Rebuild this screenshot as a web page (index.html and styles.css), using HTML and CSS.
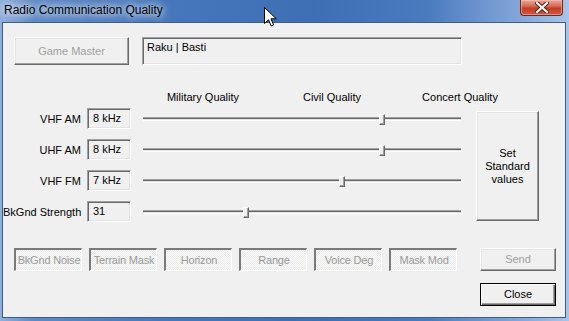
FILE: index.html
```html
<!DOCTYPE html>
<html lang="en">
  <head>
    <meta charset="UTF-8" />
    <title>Radio Communication Quality</title>
    <link rel="stylesheet" href="styles.css">
  </head>
  <body>
    <div class="window">
      <div class="titlebar">
        <span class="title">Radio Communication Quality</span>
        <button class="close-x" title="Close">
          <svg width="14" height="11" viewBox="0 0 14 11">
            <path d="M2 1 L12 10 M12 1 L2 10" stroke="#5a1a10" stroke-width="4" stroke-linecap="square" />
            <path d="M2 1 L12 10 M12 1 L2 10" stroke="#ffffff" stroke-width="2.2" stroke-linecap="square" />
          </svg>
        </button>
      </div>

      <div class="client">
        <div class="top-row">
          <button class="btn btn-disabled gm-btn">Game Master</button>
          <div class="sunken name-box">Raku | Basti</div>
        </div>

        <div class="scale-head">
          <span class="scale-mil">Military Quality</span>
          <span class="scale-civ">Civil Quality</span>
          <span class="scale-con">Concert Quality</span>
        </div>

        <div class="main">
          <div class="rows">
            <div class="row">
              <span class="row-label">VHF AM</span>
              <div class="sunken field">8 kHz</div>
              <div class="track"><span class="thumb" style="left: 236px"></span></div>
            </div>
            <div class="row">
              <span class="row-label">UHF AM</span>
              <div class="sunken field">8 kHz</div>
              <div class="track"><span class="thumb" style="left: 236px"></span></div>
            </div>
            <div class="row">
              <span class="row-label">VHF FM</span>
              <div class="sunken field">7 kHz</div>
              <div class="track"><span class="thumb" style="left: 196px"></span></div>
            </div>
            <div class="row">
              <span class="row-label">BkGnd Strength</span>
              <div class="sunken field">31</div>
              <div class="track"><span class="thumb" style="left: 100px"></span></div>
            </div>
          </div>
          <button class="btn set-btn">Set<br>Standard<br>values</button>
        </div>

        <div class="bottom">
          <div class="toggles">
            <button class="toggle">BkGnd Noise</button>
            <button class="toggle">Terrain Mask</button>
            <button class="toggle">Horizon</button>
            <button class="toggle">Range</button>
            <button class="toggle">Voice Deg</button>
            <button class="toggle">Mask Mod</button>
          </div>
          <div class="actions">
            <button class="btn btn-disabled">Send</button>
            <button class="btn btn-default">Close</button>
          </div>
        </div>
      </div>

      <!-- mouse pointer over the title bar -->
      <svg class="cursor" width="14" height="21" viewBox="0 0 14 21">
        <path d="M0.5 0.5 L0.5 16.5 L4.5 12.8 L7.2 19 L9.6 18 L7 11.8 L12.3 11.8 Z" fill="#fff" stroke="#000" stroke-width="1" stroke-linejoin="miter" />
      </svg>
    </div>
  </body>
</html>
```

FILE: styles.css
```css
* {
  margin: 0;
  padding: 0;
  box-sizing: border-box;
}

body {
  font-family: "Liberation Sans", Arial, sans-serif;
  font-size: 11px;
  color: #000;
  background-color: #fff;
}

button {
  font-family: inherit;
  font-size: 11px;
  background: none;
  border: none;
  color: inherit;
}

.window {
  position: relative;
  width: 569px;
  height: 321px;
  overflow: hidden;
  background: linear-gradient(90deg, #8fb0dc 0%, #5d89c6 6%, #4676bb 30%, #3e6fb5 55%, #4a7bbf 75%, #86a8da 92%, #a9c4e8 100%);
}

.titlebar {
  height: 22px;
  display: flex;
  align-items: flex-start;
}

.title {
  margin: 3px 0 0 4px;
  padding: 0 6px 0 0;
  font-size: 12px;
  line-height: 15px;
  color: #000;
  text-shadow: 0 0 6px rgba(255, 255, 255, 0.9), 0 0 10px rgba(255, 255, 255, 0.7), 0 0 14px rgba(255, 255, 255, 0.5);
}

.close-x {
  margin-left: auto;
  margin-right: 6px;
  width: 43px;
  height: 16px;
  border: 1px solid #6a2a20;
  border-top: none;
  border-radius: 0 0 4px 4px;
  background: linear-gradient(#e9a898 0%, #d66d58 40%, #c33d25 55%, #cf5a3e 100%);
  box-shadow: inset 0 0 0 1px rgba(255, 200, 190, 0.5);
  display: flex;
  align-items: center;
  justify-content: center;
}

.client {
  margin: 0 3px 0 2px;
  height: 296px;
  border: 1px solid #3d5d88;
  background-color: #f0f0f0;
}

/* generic raised push button */
.btn {
  border: 1px solid;
  border-color: #fff #696969 #696969 #fff;
  box-shadow: inset -1px -1px #a0a0a0, inset 1px 1px #e3e3e3;
  background-color: #f0f0f0;
  text-align: center;
  line-height: 13px;
}

.btn-disabled {
  color: #a0a0a0;
}

.btn-default {
  border-color: #000;
  box-shadow: inset 1px 1px #fff, inset -1px -1px #696969, inset -2px -2px #a0a0a0;
}

.sunken {
  border: 1px solid;
  border-color: #a0a0a0 #fff #fff #a0a0a0;
  box-shadow: inset 1px 1px #696969, inset -1px -1px #e3e3e3;
}

.top-row {
  display: flex;
  margin-top: 14px;
  padding-left: 11px;
}

.gm-btn {
  width: 115px;
  height: 28px;
}

.name-box {
  width: 320px;
  height: 28px;
  margin-left: 13px;
  padding: 3px 4px;
  line-height: 13px;
}

.scale-head {
  display: flex;
  margin-top: 26px;
  padding-left: 140px;
  line-height: 13px;
  white-space: nowrap;
}

.scale-head span {
  text-align: center;
}

.scale-mil {
  width: 120px;
}

.scale-civ {
  width: 138px;
}

.scale-con {
  width: 118px;
}

.main {
  display: flex;
  align-items: flex-start;
  margin-top: 4px;
}

.rows {
  display: flex;
  flex-direction: column;
  gap: 10px;
}

.row {
  display: flex;
  align-items: center;
  height: 21px;
}

.row-label {
  width: 80px;
  padding-right: 2px;
  text-align: right;
  white-space: nowrap;
}

.field {
  width: 44px;
  height: 21px;
  margin-left: 4px;
  padding-left: 5px;
  line-height: 19px;
}

.track {
  position: relative;
  width: 318px;
  height: 4px;
  margin-left: 12px;
  border-top: 1px solid #a0a0a0;
  border-bottom: 1px solid #fff;
  background: linear-gradient(#696969 50%, #e3e3e3 50%);
}

.thumb {
  position: absolute;
  top: -4px;
  width: 6px;
  height: 11px;
  background-color: #f0f0f0;
  border: 1px solid;
  border-color: #fff #696969 #696969 #fff;
  box-shadow: inset -1px -1px #a0a0a0;
}

.set-btn {
  width: 63px;
  height: 110px;
  margin-left: 15px;
  margin-top: 3px;
}

.bottom {
  display: flex;
  align-items: flex-start;
  margin-top: 26px;
  padding-left: 11px;
}

.toggles {
  display: flex;
  gap: 7px;
}

/* pushed-in, disabled toggle buttons */
.toggle {
  width: 68px;
  height: 23px;
  padding-left: 1px;
  border-style: solid;
  border-width: 2px 1px 1px 2px;
  border-color: #7a7a7a #fff #fff #7a7a7a;
  background: repeating-conic-gradient(#fbfbfb 0 25%, #ebebeb 0 50%) 0 0 / 2px 2px;
  color: #9a9a9a;
  white-space: nowrap;
  overflow: visible;
  letter-spacing: -0.2px;
}

.actions {
  display: flex;
  flex-direction: column;
  gap: 12px;
  margin-left: 23px;
}

.actions .btn {
  width: 76px;
  height: 23px;
}

.cursor {
  position: absolute;
  left: 264px;
  top: 7px;
}
```
